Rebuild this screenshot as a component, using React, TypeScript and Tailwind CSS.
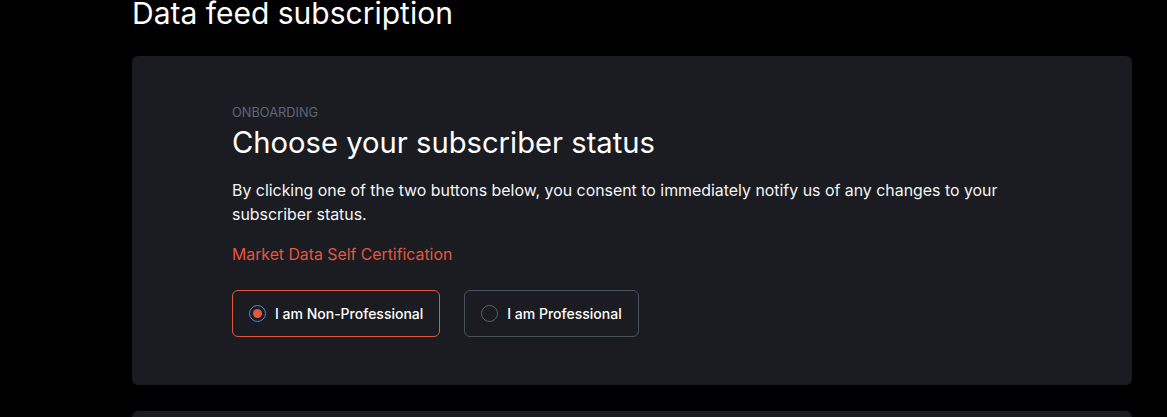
import { useState } from 'react';

export default function App() {
  const [status, setStatus] = useState<'non' | 'pro'>('non');

  return (
    <div className="min-h-screen bg-black text-white font-['Inter',sans-serif]">
      <div className="mx-[132px] w-[1000px]">
        <h1 className="-mt-[5px] text-[30px] leading-[36px] text-white">Data feed subscription</h1>

        <div className="mt-[25px] rounded-md bg-[#1b1c21] pl-[100px] pr-[100px] pt-[49px] pb-[48px]">
          <p className="text-[12.8px] leading-[16px] uppercase text-[#5f6677]">Onboarding</p>
          <h2 className="mt-[2px] text-[29.2px] leading-[40px] text-white">Choose your subscriber status</h2>
          <p className="mt-[16px] text-[15.9px] leading-[24px] text-[#f3f4f6]">
            By clicking one of the two buttons below, you consent to immediately notify us of any changes to your
            subscriber status.
          </p>
          <p className="mt-[16px] text-[15.8px] leading-[24px] text-[#e3563f]">Market Data Self Certification</p>

          <div className="mt-[23px] flex gap-[24px]">
            <button
              onClick={() => setStatus('non')}
              className={`flex h-[47px] items-center gap-[9px] rounded-md border pl-[16px] pr-[16px] text-[14px] font-medium ${
                status === 'non' ? 'border-[#e3563f]' : 'border-[#4b5163]'
              }`}
            >
              <span
                className={`flex h-[17px] w-[17px] items-center justify-center rounded-full border-[1.5px] ${
                  status === 'non' ? 'border-[#3b8ee8]' : 'border-[#5a6070]'
                }`}
              >
                {status === 'non' && <span className="h-[9px] w-[9px] rounded-full bg-[#e3563f]" />}
              </span>
              I am Non-Professional
            </button>
            <button
              onClick={() => setStatus('pro')}
              className={`flex h-[47px] items-center gap-[9px] rounded-md border pl-[16px] pr-[16px] text-[14px] font-medium ${
                status === 'pro' ? 'border-[#e3563f]' : 'border-[#4b5163]'
              }`}
            >
              <span
                className={`flex h-[17px] w-[17px] items-center justify-center rounded-full border-[1.5px] ${
                  status === 'pro' ? 'border-[#3b8ee8]' : 'border-[#5a6070]'
                }`}
              >
                {status === 'pro' && <span className="h-[9px] w-[9px] rounded-full bg-[#e3563f]" />}
              </span>
              I am Professional
            </button>
          </div>
        </div>

        <div className="mt-[26px] h-[120px] rounded-md bg-[#1b1c21]" />
      </div>
    </div>
  );
}
